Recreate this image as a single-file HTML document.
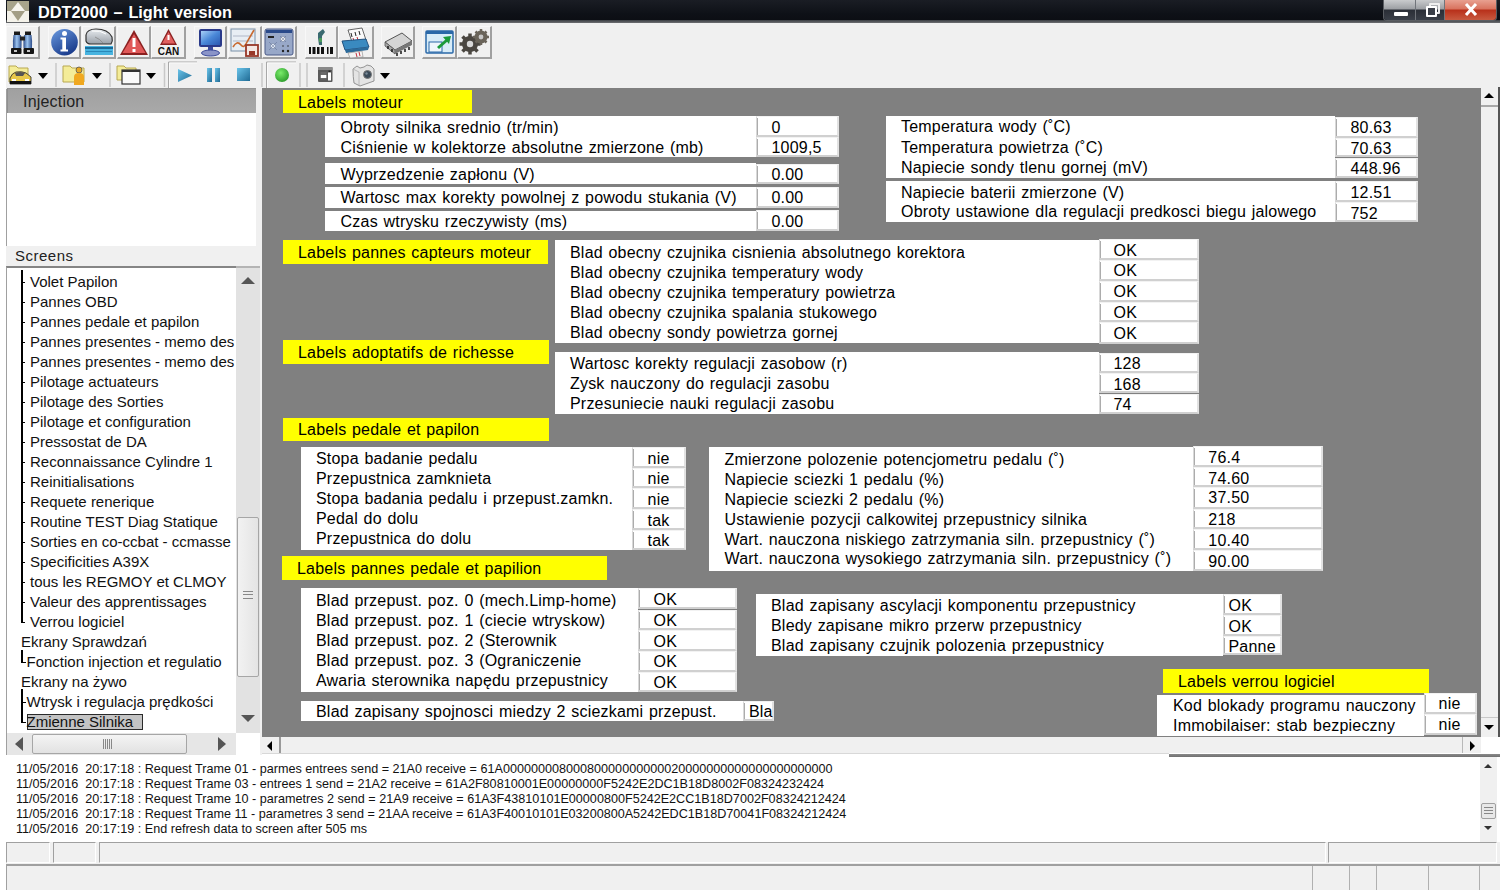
<!DOCTYPE html><html><head><meta charset="utf-8"><style>
*{margin:0;padding:0;box-sizing:border-box}
html,body{width:1500px;height:890px;overflow:hidden;background:#fff;position:relative;font-family:"Liberation Sans",sans-serif}
.a{position:absolute}
.t{position:absolute;white-space:nowrap;font-size:16px;letter-spacing:0.2px;word-spacing:1.0px;color:#000;line-height:20px}
.w{position:absolute;background:#fff}
.y{position:absolute;background:#ffff00}
.v{position:absolute;background:#fff;border-left:1px solid #d8d8d8;border-top:1px solid #f2f2f2;border-right:2px solid #e2e2e2;border-bottom:2px solid #d0d0d0;}
.v:before{content:"";position:absolute;left:0px;top:1px;bottom:0px;width:1px;background:#acacac}
.li{position:absolute;white-space:nowrap;font-size:15px;letter-spacing:0px;color:#111;line-height:20px}
.log{position:absolute;white-space:nowrap;font-size:13.5px;line-height:15px;color:#111;transform-origin:0 0}
</style></head><body>
<div class="a" style="left:6px;top:0;width:1494px;height:23px;background:linear-gradient(#1a1d24,#0e1117 60%,#0b0d12);"></div>
<div class="a" style="left:6px;top:20px;width:1494px;height:3px;background:linear-gradient(#3a3d42,#6d6f72)"></div>
<svg class="a" style="left:7px;top:1px" width="22" height="21" viewBox="0 0 22 21">
<rect width="22" height="21" fill="#a8a48c"/>
<rect y="10" width="22" height="11" fill="#f4f2ea"/>
<polygon points="11,1 18,10 4,10" fill="#f6f4ee"/>
<polygon points="4,10 18,10 11,20" fill="#a39e86"/>
</svg>
<div class="a" style="left:38px;top:1px;font-size:16.3px;font-weight:bold;color:#fff;word-spacing:1.3px;line-height:22px;white-space:nowrap">DDT2000 – Light version</div>
<div class="a" style="left:1383px;top:0;width:114px;height:21px;border:1px solid #5a5d62;border-top:none;border-radius:0 0 4px 4px;overflow:hidden">
<div class="a" style="left:0;top:0;width:31px;height:20px;background:linear-gradient(#c9cbcd,#9c9fa3 45%,#2a2e36 50%,#3a3f48)"></div>
<div class="a" style="left:31px;top:0;width:1px;height:20px;background:#70747a"></div>
<div class="a" style="left:32px;top:0;width:28px;height:20px;background:linear-gradient(#c9cbcd,#9c9fa3 45%,#2a2e36 50%,#3a3f48)"></div>
<div class="a" style="left:60px;top:0;width:1px;height:20px;background:#70747a"></div>
<div class="a" style="left:61px;top:0;width:53px;height:20px;background:linear-gradient(#e8a090,#d8725e 45%,#b8301a 50%,#c85a40)"></div>
<div class="a" style="left:10px;top:12px;width:14px;height:4px;background:#fff;border-radius:1px"></div>
<div class="a" style="left:45px;top:3px;width:11px;height:11px;border:2px solid #eee;border-radius:1px"></div>
<div class="a" style="left:42px;top:6px;width:11px;height:11px;border:2.5px solid #fff;background:#3a3f48;border-radius:1px"></div>
<svg class="a" style="left:80px;top:3px" width="14" height="13"><path d="M2 1 L12 12 M12 1 L2 12" stroke="#fff" stroke-width="3"/></svg>
</div>
<div class="a" style="left:6px;top:23px;width:1494px;height:66px;background:#f0f0f0"></div>
<div class="a" style="left:6px;top:26px;width:34px;height:33px;border-right:2px solid #a0a0a0;border-bottom:2px solid #a0a0a0;border-left:1px solid #f8f8f8;border-top:1px solid #f8f8f8"></div>
<div class="a" style="left:48px;top:26px;width:33px;height:33px;border-right:2px solid #a0a0a0;border-bottom:2px solid #a0a0a0;border-left:1px solid #f8f8f8;border-top:1px solid #f8f8f8"></div>
<div class="a" style="left:82px;top:26px;width:34px;height:33px;border-right:2px solid #a0a0a0;border-bottom:2px solid #a0a0a0;border-left:1px solid #f8f8f8;border-top:1px solid #f8f8f8"></div>
<div class="a" style="left:117px;top:26px;width:34px;height:33px;border-right:2px solid #a0a0a0;border-bottom:2px solid #a0a0a0;border-left:1px solid #f8f8f8;border-top:1px solid #f8f8f8"></div>
<div class="a" style="left:151px;top:26px;width:35px;height:33px;border-right:2px solid #a0a0a0;border-bottom:2px solid #a0a0a0;border-left:1px solid #f8f8f8;border-top:1px solid #f8f8f8"></div>
<div class="a" style="left:194px;top:26px;width:33px;height:33px;border-right:2px solid #a0a0a0;border-bottom:2px solid #a0a0a0;border-left:1px solid #f8f8f8;border-top:1px solid #f8f8f8"></div>
<div class="a" style="left:228px;top:26px;width:33.60000000000002px;height:33px;border-right:2px solid #a0a0a0;border-bottom:2px solid #a0a0a0;border-left:1px solid #f8f8f8;border-top:1px solid #f8f8f8"></div>
<div class="a" style="left:262px;top:26px;width:34.80000000000001px;height:33px;border-right:2px solid #a0a0a0;border-bottom:2px solid #a0a0a0;border-left:1px solid #f8f8f8;border-top:1px solid #f8f8f8"></div>
<div class="a" style="left:304.7px;top:26px;width:33.60000000000002px;height:33px;border-right:2px solid #a0a0a0;border-bottom:2px solid #a0a0a0;border-left:1px solid #f8f8f8;border-top:1px solid #f8f8f8"></div>
<div class="a" style="left:338.3px;top:26px;width:35.69999999999999px;height:33px;border-right:2px solid #a0a0a0;border-bottom:2px solid #a0a0a0;border-left:1px solid #f8f8f8;border-top:1px solid #f8f8f8"></div>
<div class="a" style="left:381px;top:26px;width:34.30000000000001px;height:33px;border-right:2px solid #a0a0a0;border-bottom:2px solid #a0a0a0;border-left:1px solid #f8f8f8;border-top:1px solid #f8f8f8"></div>
<div class="a" style="left:422.4px;top:26px;width:34.30000000000001px;height:33px;border-right:2px solid #a0a0a0;border-bottom:2px solid #a0a0a0;border-left:1px solid #f8f8f8;border-top:1px solid #f8f8f8"></div>
<div class="a" style="left:456.7px;top:26px;width:35.0px;height:33px;border-right:2px solid #a0a0a0;border-bottom:2px solid #a0a0a0;border-left:1px solid #f8f8f8;border-top:1px solid #f8f8f8"></div>

<svg class="a" style="left:0;top:0" width="500" height="90">
<!-- binoculars -->
<defs>
<linearGradient id="gb" x1="0" x2="1"><stop offset="0" stop-color="#2a4a88"/><stop offset="0.45" stop-color="#9cc4f0"/><stop offset="1" stop-color="#2a4a88"/></linearGradient>
<linearGradient id="gi" x1="0" y1="0" x2="0.6" y2="1"><stop offset="0" stop-color="#6a9ae0"/><stop offset="1" stop-color="#1a3c8c"/></linearGradient>
<linearGradient id="gc" x1="0" y1="0" x2="0" y2="1"><stop offset="0" stop-color="#e8ecf0"/><stop offset="1" stop-color="#9aa0a8"/></linearGradient>
</defs>
<rect x="14" y="31.5" width="6" height="3.5" fill="#1a1a1a"/><rect x="25" y="31.5" width="6" height="3.5" fill="#1a1a1a"/>
<path d="M13.5 35 h7.5 q1 6 0.5 13 h-8.5 q-0.5 -7 0.5 -13z" fill="url(#gb)"/>
<path d="M24 35 h7.5 q1 6 0.5 13 h-8.5 q-0.5 -7 0.5 -13z" fill="url(#gb)"/>
<rect x="20" y="36.5" width="5" height="4" fill="#222"/>
<rect x="11" y="48" width="10.5" height="6" rx="1" fill="#151515"/><rect x="23.5" y="48" width="10.5" height="6" rx="1" fill="#151515"/>
<rect x="14" y="50" width="3" height="2" fill="#c8c8c8"/><rect x="27" y="50" width="3" height="2" fill="#c8c8c8"/>
<!-- info -->
<circle cx="64.5" cy="42.2" r="13.3" fill="url(#gi)"/>
<circle cx="64.5" cy="33.6" r="2.5" fill="#fff"/><path d="M60.5 37.5h5.5v12h2v2h-7.5v-2h1.8v-10h-1.8z" fill="#fff"/>
<!-- car -->
<path d="M86 35 q1 -6 10 -6 q12 0 16 8 q1 4 -1 7 h-20 q-4 0 -5 -3z" fill="url(#gc)" stroke="#333" stroke-width="1.2"/>
<path d="M92 31 q8 -1 14 3" stroke="#fff" stroke-width="1" fill="none"/><path d="M95 37 q5 2 8 6" stroke="#888" stroke-width="0.8" fill="none"/>
<rect x="85" y="46" width="28" height="9" fill="#48b4e0"/><rect x="85" y="47" width="28" height="2" fill="#1a6a98"/><rect x="86" y="51" width="26" height="1" fill="#2a88b8"/>
<!-- warning -->
<polygon points="134,30 148,55 120,55" fill="#8a2020"/><polygon points="134,34 145.5,53 122.5,53" fill="#e05858"/>
<rect x="132.5" y="38" width="3" height="9" fill="#fff"/><rect x="132.5" y="49" width="3" height="3" fill="#fff"/>
<!-- CAN -->
<polygon points="168.5,29 177,45 160,45" fill="#8a2020"/><polygon points="168.5,32 175,43.5 162,43.5" fill="#e06060"/>
<rect x="167.5" y="35" width="2" height="5" fill="#fff"/>
<text x="168.5" y="55" font-family="Liberation Sans" font-weight="bold" font-size="10" text-anchor="middle" fill="#111">CAN</text>
<!-- monitor -->
<defs><linearGradient id="gm" x1="0" y1="0" x2="1" y2="1"><stop offset="0" stop-color="#a8d0f8"/><stop offset="0.5" stop-color="#4a88d8"/><stop offset="1" stop-color="#2a58b0"/></linearGradient></defs><rect x="199" y="29" width="23" height="18" rx="2" fill="#2a3a8a"/><rect x="201" y="31" width="19" height="14" fill="url(#gm)"/>
<rect x="208" y="47" width="5" height="4" fill="#3a4a9a"/><ellipse cx="210.5" cy="53" rx="9" ry="3" fill="#8a94c8" stroke="#3a4a9a"/>
<!-- chart -->
<rect x="231" y="29" width="24" height="22" fill="#e8eef4" stroke="#7890a8"/>
<line x1="233" y1="36" x2="253" y2="36" stroke="#b0b8c8"/><line x1="233" y1="41" x2="253" y2="41" stroke="#b0b8c8"/>
<path d="M233 47 q4 -7 8 -2 q3 4 6 -3 l7 -12" stroke="#c86a30" stroke-width="1.6" fill="none"/>
<rect x="246" y="45" width="12" height="11" fill="#f4e8e4" stroke="#983828" stroke-width="1.8"/><rect x="249" y="51" width="6" height="4" fill="#983828"/>
<!-- panel -->
<rect x="265" y="29" width="28" height="26" rx="2" fill="#98a8c8" stroke="#4a5a88"/>
<rect x="266" y="30" width="26" height="3" fill="#2a4a8a"/>
<circle cx="283" cy="39" r="2.5" fill="#f4f4f4" stroke="#6a7a98" stroke-width="0.6"/><circle cx="273" cy="46" r="2.5" fill="#e8eef8" stroke="#6a7a98" stroke-width="0.6"/><path d="M269 42 l8 8 M277 42 l-8 8 M280 36 l6 6 M286 36 l-6 6" stroke="#5a6a90" stroke-width="0.5"/>
<rect x="268" y="36" width="6" height="2" fill="#222"/>
<circle cx="283" cy="51" r="1.2" fill="#222"/><circle cx="288" cy="51" r="1.2" fill="#222"/><circle cx="283" cy="46" r="0.8" fill="#333"/><circle cx="288" cy="46" r="0.8" fill="#333"/>
<!-- barcode -->
<path d="M318 33 l5 -4 l2 3 l-3 4 v9 l-3 0 l-1 -7z" fill="#3a6a70"/><rect x="319" y="38" width="3" height="4" fill="#4a9a5a"/>
<g fill="#111"><rect x="309" y="47" width="2" height="7"/><rect x="312.5" y="47" width="3" height="7"/><rect x="317" y="47" width="2.5" height="7"/><rect x="321" y="47" width="3" height="7"/><rect x="327" y="47" width="1.5" height="7"/><rect x="330" y="47" width="3" height="7"/></g>
<!-- printer -->
<path d="M348 30 l14 -2 l4 12 l-14 2z" fill="#fafafa" stroke="#444" stroke-width="0.8"/>
<g stroke="#222" stroke-width="1"><line x1="351" y1="33" x2="352" y2="37"/><line x1="355" y1="32" x2="356" y2="36"/><line x1="359" y1="31" x2="360" y2="35"/></g>
<g stroke="#c03040" stroke-width="1"><line x1="353" y1="38" x2="354" y2="41"/><line x1="357" y1="37" x2="358" y2="40"/></g>
<path d="M342 41 l24 -2 l3 8 l-24 3z" fill="#3a8ac0" stroke="#1a4a78" stroke-width="0.9"/>
<path d="M345 50 l24 -3 l-1 3 l-22 3z" fill="#2a6a9a"/>
<path d="M348 53 l14 -2 l1 6 l-13 1z" fill="#f4f4f4" stroke="#888" stroke-width="0.6"/>
<g stroke="#c03040" stroke-width="1"><line x1="356" y1="53" x2="357" y2="57"/><line x1="359" y1="52" x2="360" y2="56"/></g>
<!-- chip -->
<path d="M385 42 l17 -9 l10 8 l-17 9z" fill="#d4d4d4" stroke="#555" stroke-width="1"/>
<path d="M385 42 l10 8 v4 l-10 -8z" fill="#a8a8a8" stroke="#555" stroke-width="0.8"/>
<path d="M395 50 l17 -9 v4 l-17 9z" fill="#777"/>
<g stroke="#222" stroke-width="1.6"><line x1="397" y1="53" x2="397" y2="56"/><line x1="401" y1="51" x2="401" y2="54"/><line x1="405" y1="49" x2="405" y2="52"/><line x1="409" y1="47" x2="409" y2="50"/><line x1="388" y1="46" x2="388" y2="49"/><line x1="392" y1="49" x2="392" y2="52"/></g>
<!-- window arrow -->
<rect x="426" y="31" width="27" height="22" rx="1" fill="#d8ecf8" stroke="#2a68a8" stroke-width="1.5"/>
<rect x="426" y="31" width="27" height="3" fill="#2a68a8"/>
<rect x="429" y="42" width="13" height="10" fill="#eef6fc" stroke="#2a68a8"/>
<path d="M438 48 l9 -8" stroke="#1a9a3a" stroke-width="3"/><polygon points="443,37 451,36 449,44" fill="#1a9a3a"/>
<!-- gear -->
<g fill="#4a4640">
<circle cx="470" cy="44" r="8"/>
<g stroke="#4a4640" stroke-width="3.5"><line x1="470" y1="33.5" x2="470" y2="54.5"/><line x1="459.5" y1="44" x2="480.5" y2="44"/><line x1="462.5" y1="36.5" x2="477.5" y2="51.5"/><line x1="477.5" y1="36.5" x2="462.5" y2="51.5"/></g>
<circle cx="481" cy="37" r="6.5" fill="#6a645a"/>
<g stroke="#6a645a" stroke-width="2.5"><line x1="481" y1="29" x2="481" y2="45"/><line x1="473" y1="37" x2="489" y2="37"/><line x1="475.5" y1="31.5" x2="486.5" y2="42.5"/><line x1="486.5" y1="31.5" x2="475.5" y2="42.5"/></g>
</g>
<circle cx="470" cy="44" r="3.2" fill="#d8d8d8"/><circle cx="481" cy="37" r="2.4" fill="#c8c8c8"/>
<!-- row 2 -->
<path d="M9 66 h7 l2 2 h10 v14 h-19z" fill="#f4ec98" stroke="#b8a850"/>
<path d="M10 78 q2 -5 6 -6 q6 -1 10 1 l5 4 v7 h-21z" fill="#e8c84a" stroke="#222" stroke-width="0.8"/>
<path d="M15 73 q5 -2 10 0 l-2 3 h-7z" fill="#555"/>
<rect x="10" y="81" width="21" height="3" fill="#111"/><rect x="12" y="79" width="4" height="2" fill="#fff"/><rect x="25" y="79" width="4" height="2" fill="#fff"/>
<polygon points="38,73 48,73 43,79" fill="#000"/>
<line x1="56" y1="63" x2="56" y2="87" stroke="#c8c8c8" stroke-width="1.5"/>
<path d="M63 66 h7 l2 2 h12 v14 h-21z" fill="#f4ec98" stroke="#b8a850"/>
<circle cx="79" cy="70" r="3" fill="#e8a820" stroke="#555" stroke-width="0.8"/><path d="M74 85 v-8 q0 -4 5 -4 q5 0 5 4 v8z" fill="#f0a820"/>
<polygon points="92,73 102,73 97,79" fill="#000"/>
<line x1="110" y1="63" x2="110" y2="87" stroke="#c8c8c8" stroke-width="1.5"/>
<path d="M117 66 h7 l2 2 h10 v12 h-19z" fill="#f4ec98" stroke="#b8a850"/>
<rect x="122" y="70" width="18" height="14" fill="#fafafa" stroke="#333" stroke-width="1.2"/><rect x="122" y="70" width="18" height="2" fill="#333"/>
<polygon points="146,73 156,73 151,79" fill="#000"/>
<line x1="164.5" y1="63" x2="164.5" y2="87" stroke="#c8c8c8" stroke-width="1.5"/>
<defs><linearGradient id="gp" x1="0" y1="0" x2="1" y2="1"><stop offset="0" stop-color="#6ac4ea"/><stop offset="1" stop-color="#1f6a94"/></linearGradient>
<radialGradient id="gg" cx="0.4" cy="0.35" r="0.7"><stop offset="0" stop-color="#7aec6a"/><stop offset="1" stop-color="#2a9a2a"/></radialGradient></defs>
<path d="M168.5 88 V62 H197" stroke="#a8a8a8" stroke-width="1" fill="none"/><path d="M169.5 88 V63 H197" stroke="#fafafa" stroke-width="1" fill="none"/>
<path d="M266.5 88 V62 H296" stroke="#a8a8a8" stroke-width="1" fill="none"/><path d="M267.5 88 V63 H296" stroke="#fafafa" stroke-width="1" fill="none"/>
<polygon points="178,69 192,75.5 178,82" fill="url(#gp)"/>
<rect x="207" y="68" width="5" height="14" fill="url(#gp)"/><rect x="215" y="68" width="5" height="14" fill="url(#gp)"/>
<rect x="237" y="68" width="13" height="13" fill="url(#gp)"/>
<line x1="262" y1="63" x2="262" y2="87" stroke="#c8c8c8" stroke-width="1.5"/>
<circle cx="282" cy="75" r="7" fill="url(#gg)"/>
<line x1="300" y1="63" x2="300" y2="87" stroke="#c8c8c8" stroke-width="1.5"/>
<line x1="307" y1="63" x2="307" y2="87" stroke="#c8c8c8" stroke-width="1.5"/>
<rect x="318" y="67" width="14.5" height="15" rx="1" fill="#5a5a5a"/><rect x="318" y="67" width="14.5" height="3" fill="#8a8a8a"/>
<rect x="320.5" y="72" width="6" height="7.5" fill="#6a6a6a"/><rect x="320.8" y="75" width="5.5" height="3" fill="#fff"/>
<rect x="328" y="72.5" width="3" height="8" fill="#fff"/><rect x="328.5" y="70.5" width="2" height="1.5" fill="#222"/>
<line x1="344" y1="63" x2="344" y2="87" stroke="#c8c8c8" stroke-width="1.5"/>
<path d="M353 69 l4 -3 l3 2 l4 -1 l3 -2 l4 1 l3 3 v12 l-14 5 l-6 -3 q-1 -6 -1 -14z" fill="#e4e4e4" stroke="#8a8a8a" stroke-width="0.9"/>
<path d="M353 69 l6 3 v13" stroke="#b0b0b0" stroke-width="0.8" fill="none"/>
<circle cx="367.5" cy="74.5" r="4" fill="#3a4a58" stroke="#777" stroke-width="1"/><circle cx="366.5" cy="73.5" r="1.2" fill="#7a8a98"/>
<polygon points="380,73 390,73 385,79" fill="#000"/>
</svg>
<div class="a" style="left:6px;top:88px;width:256px;height:667px;background:#f0f0f0"></div>
<div class="a" style="left:6px;top:89px;width:250px;height:157px;border-left:1px solid #a0a0a0;background:#fff"></div>
<div class="a" style="left:7px;top:88px;width:249px;height:25px;border-top:1px solid #959595;border-left:1px solid #909090;background:linear-gradient(#a0a0a0,#a9a9a9)"></div>
<div class="li" style="left:23px;top:91.5px;color:#222;font-size:16px;letter-spacing:0.2px">Injection</div>
<div class="li" style="left:15px;top:246px;color:#222;font-size:15px;line-height:20px;letter-spacing:0.5px">Screens</div>
<div class="a" style="left:6px;top:266px;width:254px;height:489px;border-left:1px solid #a0a0a0;border-top:2px solid #858585;background:#fff"></div>
<div class="a" style="left:236px;top:266px;width:24px;height:2px;background:#b4b4b4"></div>
<div class="li" style="left:30px;top:271.6px">Volet Papilon</div>
<div class="a" style="left:21px;top:281.6px;width:4px;height:1.5px;background:#000"></div>
<div class="li" style="left:30px;top:291.6px">Pannes OBD</div>
<div class="a" style="left:21px;top:301.6px;width:4px;height:1.5px;background:#000"></div>
<div class="li" style="left:30px;top:311.6px">Pannes pedale et papilon</div>
<div class="a" style="left:21px;top:321.6px;width:4px;height:1.5px;background:#000"></div>
<div class="li" style="left:30px;top:331.6px">Pannes presentes - memo des</div>
<div class="a" style="left:21px;top:341.6px;width:4px;height:1.5px;background:#000"></div>
<div class="li" style="left:30px;top:351.6px">Pannes presentes - memo des</div>
<div class="a" style="left:21px;top:361.6px;width:4px;height:1.5px;background:#000"></div>
<div class="li" style="left:30px;top:371.6px">Pilotage actuateurs</div>
<div class="a" style="left:21px;top:381.6px;width:4px;height:1.5px;background:#000"></div>
<div class="li" style="left:30px;top:391.6px">Pilotage des Sorties</div>
<div class="a" style="left:21px;top:401.6px;width:4px;height:1.5px;background:#000"></div>
<div class="li" style="left:30px;top:411.6px">Pilotage et configuration</div>
<div class="a" style="left:21px;top:421.6px;width:4px;height:1.5px;background:#000"></div>
<div class="li" style="left:30px;top:431.6px">Pressostat de DA</div>
<div class="a" style="left:21px;top:441.6px;width:4px;height:1.5px;background:#000"></div>
<div class="li" style="left:30px;top:451.6px">Reconnaissance Cylindre 1</div>
<div class="a" style="left:21px;top:461.6px;width:4px;height:1.5px;background:#000"></div>
<div class="li" style="left:30px;top:471.6px">Reinitialisations</div>
<div class="a" style="left:21px;top:481.6px;width:4px;height:1.5px;background:#000"></div>
<div class="li" style="left:30px;top:491.6px">Requete renerique</div>
<div class="a" style="left:21px;top:501.6px;width:4px;height:1.5px;background:#000"></div>
<div class="li" style="left:30px;top:511.6px">Routine TEST Diag Statique</div>
<div class="a" style="left:21px;top:521.6px;width:4px;height:1.5px;background:#000"></div>
<div class="li" style="left:30px;top:531.6px">Sorties en co-ccbat - ccmasse</div>
<div class="a" style="left:21px;top:541.6px;width:4px;height:1.5px;background:#000"></div>
<div class="li" style="left:30px;top:551.6px">Specificities A39X</div>
<div class="a" style="left:21px;top:561.6px;width:4px;height:1.5px;background:#000"></div>
<div class="li" style="left:30px;top:571.6px">tous les REGMOY et CLMOY</div>
<div class="a" style="left:21px;top:581.6px;width:4px;height:1.5px;background:#000"></div>
<div class="li" style="left:30px;top:591.6px">Valeur des apprentissages</div>
<div class="a" style="left:21px;top:601.6px;width:4px;height:1.5px;background:#000"></div>
<div class="li" style="left:30px;top:611.6px">Verrou logiciel</div>
<div class="a" style="left:21px;top:621.6px;width:4px;height:1.5px;background:#000"></div>
<div class="a" style="left:20.5px;top:270px;width:2px;height:352.6px;background:#000"></div>
<div class="li" style="left:21px;top:631.6px">Ekrany Sprawdzań</div>
<div class="a" style="left:20.5px;top:649.6px;width:2.5px;height:13px;background:#000"></div>
<div class="a" style="left:21px;top:661.6px;width:5px;height:1.5px;background:#000"></div>
<div class="li" style="left:26.5px;top:651.6px">Fonction injection et regulatio</div>
<div class="li" style="left:21px;top:671.6px">Ekrany na żywo</div>
<div class="a" style="left:20.5px;top:688.6px;width:2px;height:34px;background:#000"></div>
<div class="a" style="left:21px;top:701.6px;width:5px;height:1.5px;background:#000"></div>
<div class="li" style="left:26.5px;top:691.6px">Wtrysk i regulacja prędkości</div>
<div class="a" style="left:21px;top:721.6px;width:5px;height:1.5px;background:#000"></div>
<div class="a" style="left:27px;top:714px;width:116px;height:16px;background:#c4c4c4;border:1px solid #2a2a2a"></div>
<div class="li" style="left:26.5px;top:711.6px">Zmienne Silnika</div>
<div class="a" style="left:236px;top:268px;width:24px;height:465px;background:#e2e2e2"></div>
<svg class="a" style="left:240px;top:276px" width="16" height="10"><polygon points="8,1 15,8 1,8" fill="#555"/></svg>
<svg class="a" style="left:240px;top:713px" width="16" height="10"><polygon points="1,2 15,2 8,9" fill="#555"/></svg>
<div class="a" style="left:237px;top:517px;width:22px;height:160px;background:linear-gradient(90deg,#f2f2f2,#e4e4e4);border:1px solid #a6a6a6;border-radius:2px"></div>
<div class="a" style="left:243px;top:591px;width:10px;height:8px;border-top:1px solid #888;border-bottom:1px solid #888"></div>
<div class="a" style="left:243px;top:594px;width:10px;height:2px;border-top:1px solid #888"></div>
<div class="a" style="left:7px;top:733px;width:229px;height:22px;background:#e6e6e6"></div>
<svg class="a" style="left:13px;top:736px" width="14" height="16"><polygon points="2,8 10,1 10,15" fill="#555"/></svg>
<svg class="a" style="left:215px;top:736px" width="14" height="16"><polygon points="3,1 11,8 3,15" fill="#555"/></svg>
<div class="a" style="left:32px;top:734px;width:155px;height:20px;background:linear-gradient(#f4f4f4,#e2e2e2);border:1px solid #a6a6a6;border-radius:2px"></div>
<div class="a" style="left:103px;top:739px;width:10px;height:10px;background:repeating-linear-gradient(90deg,#888 0 1px,transparent 1px 2px)"></div>
<div class="a" style="left:236px;top:733px;width:24px;height:22px;background:#fff"></div>
<div class="a" style="left:262px;top:88px;width:1219px;height:649px;background:#808080"></div>
<div class="a" style="left:1481px;top:87px;width:17px;height:650px;background:#f0f0f0"></div>
<div class="a" style="left:1481px;top:105px;width:17px;height:2px;background:#a8a8a8"></div>
<div class="a" style="left:1498px;top:87px;width:2px;height:650px;background:#555"></div>
<svg class="a" style="left:1482px;top:91px" width="14" height="10"><polygon points="7,2 12,7 2,7" fill="#000"/></svg>
<div class="a" style="left:1481px;top:717px;width:17px;height:1px;background:#c8c8c8"></div>
<svg class="a" style="left:1482px;top:722px" width="14" height="10"><polygon points="2,3 12,3 7,8" fill="#000"/></svg>
<div class="a" style="left:262px;top:737px;width:1238px;height:16px;background:#f0f0f0"></div>
<div class="a" style="left:279px;top:737px;width:2px;height:16px;background:#9a9a9a"></div>
<svg class="a" style="left:263px;top:740px" width="14" height="12"><polygon points="4,6 9,1 9,11" fill="#000"/></svg>
<div class="a" style="left:1462px;top:737px;width:1px;height:18px;background:#b8b8b8"></div>
<svg class="a" style="left:1465px;top:740px" width="14" height="12"><polygon points="5,1 10,6 5,11" fill="#000"/></svg>
<div class="a" style="left:1481px;top:737px;width:19px;height:18px;background:#fff"></div>
<div class="y" style="left:283px;top:90.3px;width:189.0px;height:22.7px"></div>
<div class="t" style="left:298.0px;top:92.97px">Labels moteur</div>
<div class="w" style="left:325px;top:115.8px;width:430.7px;height:41.2px"></div>
<div class="t" style="left:340.6px;top:117.87px">Obroty silnika srednio (tr/min)</div>
<div class="t" style="left:340.6px;top:137.87px">Ciśnienie w kolektorze absolutne zmierzone (mb)</div>
<div class="v" style="left:755.7px;top:116.3px;width:83.3px;height:20.4px"></div>
<div class="t" style="left:771.5px;top:117.87px">0</div>
<div class="v" style="left:755.7px;top:136.7px;width:83.3px;height:20.0px"></div>
<div class="t" style="left:771.5px;top:138.27px">1009,5</div>
<div class="w" style="left:325px;top:162.8px;width:430.7px;height:21.4px"></div>
<div class="t" style="left:340.6px;top:165.07px">Wyprzedzenie zapłonu (V)</div>
<div class="v" style="left:755.7px;top:163.5px;width:83.3px;height:20.7px"></div>
<div class="t" style="left:771.5px;top:165.07px">0.00</div>
<div class="w" style="left:325px;top:186.9px;width:430.7px;height:21.2px"></div>
<div class="t" style="left:340.6px;top:187.97px">Wartosc max korekty powolnej z powodu stukania (V)</div>
<div class="v" style="left:755.7px;top:186.5px;width:83.3px;height:21.6px"></div>
<div class="t" style="left:771.5px;top:188.07px">0.00</div>
<div class="w" style="left:325px;top:211px;width:430.7px;height:20.2px"></div>
<div class="t" style="left:340.6px;top:211.67px">Czas wtrysku rzeczywisty (ms)</div>
<div class="v" style="left:755.7px;top:210.3px;width:83.3px;height:20.9px"></div>
<div class="t" style="left:771.5px;top:211.87px">0.00</div>
<div class="w" style="left:886px;top:115.7px;width:448.7px;height:62.4px"></div>
<div class="t" style="left:901px;top:117.47px">Temperatura wody (˚C)</div>
<div class="t" style="left:901px;top:137.72px">Temperatura powietrza (˚C)</div>
<div class="t" style="left:901px;top:157.97px">Napiecie sondy tlenu gornej (mV)</div>
<div class="v" style="left:1334.7px;top:116.7px;width:83.3px;height:21.0px"></div>
<div class="t" style="left:1350.5px;top:118.27px">80.63</div>
<div class="v" style="left:1334.7px;top:137.7px;width:83.3px;height:19.8px"></div>
<div class="t" style="left:1350.5px;top:139.27px">70.63</div>
<div class="v" style="left:1334.7px;top:157.5px;width:83.3px;height:20.7px"></div>
<div class="t" style="left:1350.5px;top:159.07px">448.96</div>
<div class="w" style="left:886px;top:181.4px;width:448.7px;height:40.5px"></div>
<div class="t" style="left:901px;top:182.87px">Napiecie baterii zmierzone (V)</div>
<div class="t" style="left:901px;top:202.37px">Obroty ustawione dla regulacji predkosci biegu jalowego</div>
<div class="v" style="left:1334.7px;top:181.3px;width:83.3px;height:21.1px"></div>
<div class="t" style="left:1350.5px;top:182.87px">12.51</div>
<div class="v" style="left:1334.7px;top:202.4px;width:83.3px;height:19.6px"></div>
<div class="t" style="left:1350.5px;top:203.97px">752</div>
<div class="y" style="left:283px;top:240px;width:265.2px;height:24.3px"></div>
<div class="t" style="left:298.0px;top:242.67px">Labels pannes capteurs moteur</div>
<div class="w" style="left:555px;top:239.7px;width:543.8px;height:103.2px"></div>
<div class="t" style="left:570px;top:243.27px">Blad obecny czujnika cisnienia absolutnego korektora</div>
<div class="t" style="left:570px;top:263.27px">Blad obecny czujnika temperatury wody</div>
<div class="t" style="left:570px;top:283.27px">Blad obecny czujnika temperatury powietrza</div>
<div class="t" style="left:570px;top:303.27px">Blad obecny czujnika spalania stukowego</div>
<div class="t" style="left:570px;top:323.27px">Blad obecny sondy powietrza gornej</div>
<div class="v" style="left:1098.8px;top:239.3px;width:100.2px;height:20.6px"></div>
<div class="t" style="left:1113.5px;top:240.87px">OK</div>
<div class="v" style="left:1098.8px;top:259.9px;width:100.2px;height:21.0px"></div>
<div class="t" style="left:1113.5px;top:261.47px">OK</div>
<div class="v" style="left:1098.8px;top:280.9px;width:100.2px;height:20.7px"></div>
<div class="t" style="left:1113.5px;top:282.47px">OK</div>
<div class="v" style="left:1098.8px;top:301.6px;width:100.2px;height:20.7px"></div>
<div class="t" style="left:1113.5px;top:303.17px">OK</div>
<div class="v" style="left:1098.8px;top:322.3px;width:100.2px;height:21.3px"></div>
<div class="t" style="left:1113.5px;top:323.87px">OK</div>
<div class="y" style="left:283px;top:340px;width:266.0px;height:24.0px"></div>
<div class="t" style="left:298.0px;top:342.67px">Labels adoptatifs de richesse</div>
<div class="w" style="left:555px;top:352.2px;width:543.8px;height:61.5px"></div>
<div class="t" style="left:570px;top:354.07px">Wartosc korekty regulacji zasobow (r)</div>
<div class="t" style="left:570px;top:373.97px">Zysk nauczony do regulacji zasobu</div>
<div class="t" style="left:570px;top:393.87px">Przesuniecie nauki regulacji zasobu</div>
<div class="v" style="left:1098.8px;top:352.6px;width:100.2px;height:20.6px"></div>
<div class="t" style="left:1113.5px;top:354.17px">128</div>
<div class="v" style="left:1098.8px;top:373.2px;width:100.2px;height:20.3px"></div>
<div class="t" style="left:1113.5px;top:374.77px">168</div>
<div class="v" style="left:1098.8px;top:393.5px;width:100.2px;height:20.2px"></div>
<div class="t" style="left:1113.5px;top:395.07px">74</div>
<div class="y" style="left:283px;top:417.7px;width:266.0px;height:23.0px"></div>
<div class="t" style="left:298.0px;top:420.37px">Labels pedale et papilon</div>
<div class="w" style="left:300.8px;top:446.7px;width:331.3px;height:103.3px"></div>
<div class="t" style="left:316px;top:448.87px">Stopa badanie pedalu</div>
<div class="t" style="left:316px;top:468.92px">Przepustnica zamknieta</div>
<div class="t" style="left:316px;top:488.97px">Stopa badania pedalu i przepust.zamkn.</div>
<div class="t" style="left:316px;top:509.02px">Pedal do dolu</div>
<div class="t" style="left:316px;top:529.07px">Przepustnica do dolu</div>
<div class="v" style="left:632.1px;top:447.1px;width:53.6px;height:20.7px"></div>
<div class="t" style="left:647.6px;top:448.67px">nie</div>
<div class="v" style="left:632.1px;top:467.8px;width:53.6px;height:20.6px"></div>
<div class="t" style="left:647.6px;top:469.37px">nie</div>
<div class="v" style="left:632.1px;top:488.4px;width:53.6px;height:20.7px"></div>
<div class="t" style="left:647.6px;top:489.97px">nie</div>
<div class="v" style="left:632.1px;top:509.1px;width:53.6px;height:20.7px"></div>
<div class="t" style="left:647.6px;top:510.67px">tak</div>
<div class="v" style="left:632.1px;top:529.8px;width:53.6px;height:20.0px"></div>
<div class="t" style="left:647.6px;top:531.37px">tak</div>
<div class="w" style="left:708.5px;top:447.1px;width:484.4px;height:123.7px"></div>
<div class="t" style="left:724.5px;top:449.67px">Zmierzone polozenie potencjometru pedalu (˚)</div>
<div class="t" style="left:724.5px;top:469.63px">Napiecie sciezki 1 pedalu (%)</div>
<div class="t" style="left:724.5px;top:489.59px">Napiecie sciezki 2 pedalu (%)</div>
<div class="t" style="left:724.5px;top:509.55px">Ustawienie pozycji calkowitej przepustnicy silnika</div>
<div class="t" style="left:724.5px;top:529.51px">Wart. nauczona niskiego zatrzymania siln. przepustnicy (˚)</div>
<div class="t" style="left:724.5px;top:549.47px">Wart. nauczona wysokiego zatrzymania siln. przepustnicy (˚)</div>
<div class="v" style="left:1192.9px;top:446.3px;width:130.3px;height:20.7px"></div>
<div class="t" style="left:1208.3px;top:447.87px">76.4</div>
<div class="v" style="left:1192.9px;top:467.0px;width:130.3px;height:19.7px"></div>
<div class="t" style="left:1208.3px;top:468.57px">74.60</div>
<div class="v" style="left:1192.9px;top:486.7px;width:130.3px;height:22.1px"></div>
<div class="t" style="left:1208.3px;top:488.27px">37.50</div>
<div class="v" style="left:1192.9px;top:508.8px;width:130.3px;height:20.4px"></div>
<div class="t" style="left:1208.3px;top:510.37px">218</div>
<div class="v" style="left:1192.9px;top:529.2px;width:130.3px;height:20.8px"></div>
<div class="t" style="left:1208.3px;top:530.77px">10.40</div>
<div class="v" style="left:1192.9px;top:550.0px;width:130.3px;height:21.0px"></div>
<div class="t" style="left:1208.3px;top:551.57px">90.00</div>
<div class="y" style="left:282px;top:556px;width:325.0px;height:23.6px"></div>
<div class="t" style="left:297.0px;top:558.67px">Labels pannes pedale et papilion</div>
<div class="w" style="left:300.7px;top:588.1px;width:337.4px;height:103.5px"></div>
<div class="t" style="left:316px;top:591.37px">Blad przepust. poz. 0 (mech.Limp-home)</div>
<div class="t" style="left:316px;top:611.17px">Blad przepust. poz. 1 (ciecie wtryskow)</div>
<div class="t" style="left:316px;top:630.97px">Blad przepust. poz. 2 (Sterownik</div>
<div class="t" style="left:316px;top:650.77px">Blad przepust. poz. 3 (Ograniczenie</div>
<div class="t" style="left:316px;top:670.57px">Awaria sterownika napędu przepustnicy</div>
<div class="v" style="left:638.1px;top:588.4px;width:98.5px;height:21.1px"></div>
<div class="t" style="left:653.6px;top:589.97px">OK</div>
<div class="v" style="left:638.1px;top:609.5px;width:98.5px;height:20.8px"></div>
<div class="t" style="left:653.6px;top:611.07px">OK</div>
<div class="v" style="left:638.1px;top:630.3px;width:98.5px;height:20.5px"></div>
<div class="t" style="left:653.6px;top:631.87px">OK</div>
<div class="v" style="left:638.1px;top:650.8px;width:98.5px;height:21.1px"></div>
<div class="t" style="left:653.6px;top:652.37px">OK</div>
<div class="v" style="left:638.1px;top:671.9px;width:98.5px;height:19.7px"></div>
<div class="t" style="left:653.6px;top:673.47px">OK</div>
<div class="w" style="left:300.7px;top:701.1px;width:442.6px;height:19.7px"></div>
<div class="t" style="left:316px;top:701.87px">Blad zapisany spojnosci miedzy 2 sciezkami przepust.</div>
<div class="v" style="left:743.3px;top:700.6px;width:30.5px;height:20.2px"></div>
<div class="t" style="left:748.9px;top:702.17px">Bla</div>
<div class="w" style="left:756px;top:594px;width:467.1px;height:61.6px"></div>
<div class="t" style="left:771px;top:596.37px">Blad zapisany ascylacji komponentu przepustnicy</div>
<div class="t" style="left:771px;top:616.37px">Bledy zapisane mikro przerw przepustnicy</div>
<div class="t" style="left:771px;top:636.37px">Blad zapisany czujnik polozenia przepustnicy</div>
<div class="v" style="left:1223.1px;top:594.4px;width:58.9px;height:20.7px"></div>
<div class="t" style="left:1228.5px;top:595.97px">OK</div>
<div class="v" style="left:1223.1px;top:615.1px;width:58.9px;height:20.7px"></div>
<div class="t" style="left:1228.5px;top:616.67px">OK</div>
<div class="v" style="left:1223.1px;top:635.8px;width:58.9px;height:19.3px"></div>
<div class="t" style="left:1228.5px;top:637.37px">Panne</div>
<div class="y" style="left:1163px;top:669px;width:266.3px;height:24.1px"></div>
<div class="t" style="left:1178px;top:671.67px">Labels verrou logiciel</div>
<div class="w" style="left:1157px;top:695.1px;width:267.1px;height:40.9px"></div>
<div class="t" style="left:1173px;top:696.07px">Kod blokady programu nauczony</div>
<div class="t" style="left:1173px;top:716.27px">Immobilaiser: stab bezpieczny</div>
<div class="v" style="left:1424.1px;top:692.8px;width:52.9px;height:20.9px"></div>
<div class="t" style="left:1438.6px;top:694.37px">nie</div>
<div class="v" style="left:1424.1px;top:713.7px;width:52.9px;height:21.5px"></div>
<div class="t" style="left:1438.6px;top:715.27px">nie</div>
<div class="a" style="left:262px;top:753px;width:1238px;height:89px;background:#fff"></div>
<div class="a" style="left:6px;top:755px;width:256px;height:87px;background:#fff"></div>
<div class="a" style="left:262px;top:753px;width:907px;height:1px;background:#d8d8d8"></div>
<div class="a" style="left:1169px;top:754px;width:331px;height:3px;background:linear-gradient(#8a8a8a,#707070)"></div>
<div class="log" style="left:16px;top:760.5px;transform:scaleX(0.934)">11/05/2016&nbsp; 20:17:18 : Request Trame 01 - parmes entrees send = 21A0 receive = 61A00000000800080000000000020000000000000000000000</div>
<div class="log" style="left:16px;top:775.5px;transform:scaleX(0.934)">11/05/2016&nbsp; 20:17:18 : Request Trame 03 - entrees 1 send = 21A2 receive = 61A2F80810001E00000000F5242E2DC1B18D8002F08324232424</div>
<div class="log" style="left:16px;top:790.5px;transform:scaleX(0.934)">11/05/2016&nbsp; 20:17:18 : Request Trame 10 - parametres 2 send = 21A9 receive = 61A3F43810101E00000800F5242E2CC1B18D7002F08324212424</div>
<div class="log" style="left:16px;top:805.5px;transform:scaleX(0.934)">11/05/2016&nbsp; 20:17:18 : Request Trame 11 - parametres 3 send = 21AA receive = 61A3F40010101E03200800A5242EDC1B18D70041F08324212424</div>
<div class="log" style="left:16px;top:820.5px;transform:scaleX(0.934)">11/05/2016&nbsp; 20:17:19 : End refresh data to screen after 505 ms</div>
<div class="a" style="left:1480px;top:757px;width:17px;height:85px;background:#f0f0f0"></div>
<svg class="a" style="left:1481px;top:762px" width="14" height="10"><polygon points="7,2 11,6 3,6" fill="#333"/></svg>
<div class="a" style="left:1481px;top:803px;width:15px;height:16px;background:#e8e8e8;border:1px solid #a0a0a0;border-radius:2px"></div>
<div class="a" style="left:1484px;top:807px;width:9px;height:7px;border-top:1px solid #888;border-bottom:1px solid #888"></div>
<div class="a" style="left:1484px;top:810px;width:9px;height:1px;background:#888"></div>
<svg class="a" style="left:1481px;top:823px" width="14" height="10"><polygon points="3,3 11,3 7,7" fill="#333"/></svg>
<div class="a" style="left:6px;top:842px;width:1494px;height:48px;background:#f0f0f0"></div>
<div class="a" style="left:6px;top:842px;width:44px;height:21px;border-left:1px solid #a0a0a0;border-top:1px solid #a0a0a0;border-right:1px solid #fff;border-bottom:1px solid #fff"></div>
<div class="a" style="left:52.5px;top:842px;width:43.5px;height:21px;border-left:1px solid #a0a0a0;border-top:1px solid #a0a0a0;border-right:1px solid #fff;border-bottom:1px solid #fff"></div>
<div class="a" style="left:98.5px;top:842px;width:1227.5px;height:21px;border-left:1px solid #a0a0a0;border-top:1px solid #a0a0a0;border-right:1px solid #fff;border-bottom:1px solid #fff"></div>
<div class="a" style="left:1328px;top:842px;width:169px;height:21px;border-left:1px solid #a0a0a0;border-top:1px solid #a0a0a0;border-right:1px solid #fff;border-bottom:1px solid #fff"></div>
<div class="a" style="left:6px;top:864px;width:1494px;height:26px;border-left:1px solid #a0a0a0;border-top:2px solid #a0a0a0"></div>
<div class="a" style="left:1311.5px;top:866px;width:1px;height:24px;background:#b0b0b0"></div>
<div class="a" style="left:1349.3px;top:866px;width:1px;height:24px;background:#b0b0b0"></div>
<div class="a" style="left:1376px;top:866px;width:1px;height:24px;background:#b0b0b0"></div>
<div class="a" style="left:1428.3px;top:866px;width:1px;height:24px;background:#b0b0b0"></div>
<div class="a" style="left:1479px;top:866px;width:1px;height:24px;background:#b0b0b0"></div>
</body></html>
